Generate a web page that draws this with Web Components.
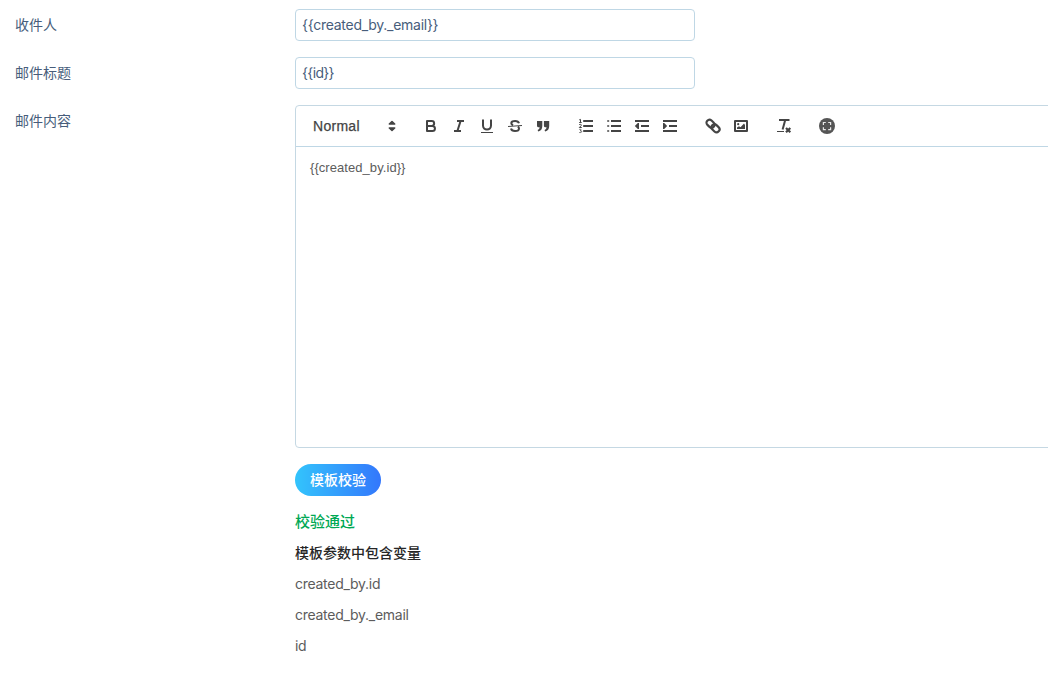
<!DOCTYPE html>
<html lang="zh-CN">
<head>
<meta charset="utf-8">
<title>邮件模板</title>
<style>
html,body{margin:0;background:#fff;overflow:hidden}
body{font-family:"Liberation Sans","Noto Sans CJK SC",sans-serif}
</style>
</head>
<body>
<mail-template-form></mail-template-form>
<script>
const define = (name, html) => {
  const template = document.createElement('template');
  template.innerHTML = html;
  customElements.define(name, class extends HTMLElement {
    constructor() {
      super();
      this.attachShadow({mode: 'open'}).appendChild(template.content.cloneNode(true));
    }
  });
};

define('form-row', `<style>
:host{display:grid;grid-template-columns:280px minmax(0,1fr);align-items:start;margin-bottom:16px}
.label{font-size:14px;line-height:32px;height:32px;color:#475d7b}
</style><div class="label"><slot name="label"></slot></div><div><slot></slot></div>`);

define('text-field', `<style>
:host{display:block;box-sizing:border-box;width:400px;height:32px;border:1px solid #bfd7e5;border-radius:4px;padding:0 6px;font:14px/30px Inter,sans-serif;color:#475d7b;white-space:nowrap;letter-spacing:var(--track,0)}
</style><slot></slot>`);

const icons = {
  bold: '<path d="M5 4h4.7a2.4 2.4 0 0 1 0 4.9H5zM5 8.9h5.4a2.55 2.55 0 0 1 0 5.1H5z"/>',
  italic: '<path d="M7 4h7M4 14h7M10.6 4 7.4 14"/>',
  underline: '<path d="M5 2.5V8.6a4 4 0 0 0 8 0V2.5"/><path stroke-width="1" d="M3 15.5h12"/>',
  strike: '<path d="M13 6.3C12.5 4.6 11 4 9.2 4 7 4 5.3 4.7 5.3 6.3c0 1 .7 1.6 1.8 2M5 11.6C5.4 13.3 7 14 9 14c2.200 0 4-.8 4-2.500 0-.8-.4-1.400-1.200-1.800"/><path stroke-width="1" d="M2 9.500 16 8.500"/>',
  quote: '<path class="f" d="M3 4h5.300v5c0 3-1.400 4.900-4 5.400l-.7-1.500c1.300-.5 1.900-1.300 2-2.700H4.500A1.500 1.500 0 0 1 3 8.700zM9.900 4h5.300v5c0 3-1.400 4.900-4 5.400l-.7-1.500c1.300-.5 1.900-1.300 2-2.700h-1.100a1.500 1.500 0 0 1-1.500-1.500z"/>',
  ordered: '<path d="M6.200 4H16M6.200 9H16M6.200 14H16"/><path stroke-width="1" d="M2.200 2.900 3.500 2.400V5.500M2.200 5.500h2.500M2.200 7.600c2-.7 2.700.3 1.800 1.200L2.300 10.500H4.800"/><path stroke-width=".8" d="M2.300 12.400c2.300-.4 2.600 1 .9 1.400 2.400.1 1.800 2.200-.9 1.700"/>',
  bullet: '<path d="M6 4h10M6 9h10M6 14h10"/><path stroke-width="1.600" d="M2.200 4h2M2.200 9h2M2.200 14h2"/>',
  outdent: '<path d="M2 4h14M8 9h8M2 14h14"/><path class="f" d="M1.800 9 4.800 6H6v6H4.800z"/>',
  indent: '<path d="M2 4h14M8 9h8M2 14h14"/><path class="f" d="M6.200 9 3.200 6H2v6h1.200z"/>',
  link: '<g transform="rotate(43 9 9)" stroke-width="2.200"><rect x="1.200" y="6" width="8.800" height="6" rx="3"/><rect x="8" y="6" width="8.800" height="6" rx="3"/></g>',
  image: '<path d="M3 4h12v10H3z"/><circle class="f" cx="6.200" cy="7.200" r="1.100"/><path class="f" d="M5 12V10.500l2-1.300 1.500 1L12 6.500 13 8v4z"/>',
  clean: '<path d="M4 3h10.500"/><path d="M10.100 3.500 7.600 12.500"/><path stroke-width="1" d="M2 14.500h7"/><path stroke-width="2.200" d="m11 11 4.300 4.300m0-4.300L11 15.300"/>',
  frame: '<circle cx="9" cy="9" r="8" fill="#555" stroke="none"/><path stroke="#e8e8e8" stroke-width="1.200" stroke-linejoin="miter" d="M5.400 7.900V5.500h2.400M10.200 5.500h2.400v2.400M12.600 10.200v2.400h-2.400M7.800 12.600H5.400v-2.400"/>'
};
customElements.define('tool-icon', class extends HTMLElement {
  connectedCallback() {
    this.attachShadow({mode: 'open'}).innerHTML = `<style>
:host{display:flex;width:28px;height:24px;align-items:center;justify-content:center;flex:none}
svg{display:block;width:18px;height:18px;fill:none;stroke:#444;stroke-width:2;stroke-linejoin:round}
.f{fill:#444;stroke:none}
</style><svg viewBox="0 0 18 18">${icons[this.getAttribute('name')]}</svg>`;
  }
});

define('tool-group', `<style>:host{display:flex;margin-right:15px}</style><slot></slot>`);

define('style-picker', `<style>
:host{display:flex;box-sizing:border-box;width:98px;height:24px;align-items:center;justify-content:space-between;padding:0 2px 0 8px;font:500 14px/24px "Liberation Sans",sans-serif;color:#444;-webkit-text-stroke:.25px #444;letter-spacing:.28px;margin-right:9px}
svg{width:18px;height:18px;display:block}
</style><slot></slot><svg viewBox="0 0 18 18"><path fill="#444" stroke="#444" stroke-width="1.500" stroke-linejoin="round" d="M6.300 7 9 4.500 11.700 7zM6.300 11 9 13.500l2.700-2.500z"/></svg>`);

define('rich-editor', `<style>
:host{display:block;box-sizing:border-box;width:900px;height:343px;border:1px solid #c5d8e3;border-radius:4px}
.bar{display:flex;align-items:center;box-sizing:border-box;height:41px;padding:0 8px 0 9px;border-bottom:1px solid #bfd7e5}
.body{padding:12px 14px;font:13px/18px "Liberation Sans",sans-serif;letter-spacing:.06px;color:#5c5c5c}
</style>
<div class="bar">
<style-picker>Normal</style-picker>
<tool-group style="margin-left:5px"><tool-icon name="bold"></tool-icon><tool-icon name="italic"></tool-icon><tool-icon name="underline"></tool-icon><tool-icon name="strike"></tool-icon><tool-icon name="quote"></tool-icon></tool-group>
<tool-group><tool-icon name="ordered"></tool-icon><tool-icon name="bullet"></tool-icon><tool-icon name="outdent"></tool-icon><tool-icon name="indent"></tool-icon></tool-group>
<tool-group><tool-icon name="link"></tool-icon><tool-icon name="image"></tool-icon></tool-group>
<tool-group><tool-icon name="clean"></tool-icon></tool-group>
<tool-group><tool-icon name="frame"></tool-icon></tool-group>
</div><div class="body"><slot></slot></div>`);

define('pill-button', `<style>
:host{display:block;width:86px;height:32px}
button{display:block;width:100%;height:100%;padding:0 0 2px;border:0;border-radius:16px;background:linear-gradient(90deg,#33c4fc,#3377fc);color:#fff;font:500 14px/30px "Noto Sans CJK SC",sans-serif;text-align:center}
</style><button><slot></slot></button>`);

define('check-result', `<style>
:host{display:block;margin-top:10px;font:14px/31px Inter,"Noto Sans CJK SC",sans-serif;color:#5c5c5c}
.ok{font-size:15px;font-weight:500;color:#00a854}
.head{font-weight:500;color:#262626}
</style><div class="ok"><slot name="status"></slot></div><div class="head"><slot name="heading"></slot></div><slot></slot>`);

define('variable-name', `<style>:host{display:block;height:31px;letter-spacing:-.27px}</style><slot></slot>`);

define('mail-template-form', `<style>
:host{display:block;padding:9px 0 0 15px;height:668px;overflow:hidden}
</style>
<form-row><span slot="label">收件人</span><text-field style="--track:-.27px">{{created_by._email}}</text-field></form-row>
<form-row><span slot="label">邮件标题</span><text-field style="--track:-.65px">{{id}}</text-field></form-row>
<form-row><span slot="label">邮件内容</span><rich-editor>{{created_by.id}}</rich-editor></form-row>
<form-row><pill-button>模板校验</pill-button><check-result><span slot="status">校验通过</span><span slot="heading">模板参数中包含变量</span><variable-name>created_by.id</variable-name><variable-name>created_by._email</variable-name><variable-name>id</variable-name></check-result></form-row>`);
</script>
</body>
</html>
